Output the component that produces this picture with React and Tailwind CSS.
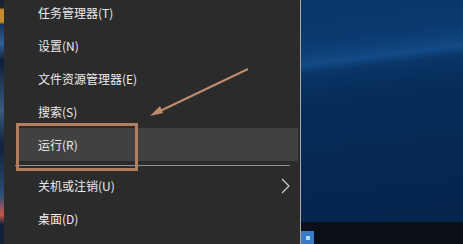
const menuTop = [
  "任务管理器(T)",
  "设置(N)",
  "文件资源管理器(E)",
  "搜索(S)",
];

function MenuRow({ label, active, arrow }) {
  return (
    <div
      className={`flex h-[33px] items-center pr-[10px] ${
        active ? "ml-[12px] mr-[2px] bg-[#414141] pl-[22px]" : "pl-[34px]"
      }`}
    >
      <span className="flex-1 text-[12px] leading-none text-[#ececec]">{label}</span>
      {arrow && (
        <svg width="9" height="16" viewBox="0 0 9 16">
          <path d="M1 1 L8 8 L1 15" fill="none" stroke="#cfcfcf" strokeWidth="1.2" />
        </svg>
      )}
    </div>
  );
}

export default function App() {
  return (
    <div
      className="relative flex h-[244px] w-[463px] overflow-hidden bg-[#2b2b2b]"
      style={{ fontFamily: '"Microsoft YaHei", "Noto Sans CJK SC", sans-serif' }}
    >
      {/* sliver of whatever is behind the menu */}
      <div className="w-[4px] shrink-0 bg-[linear-gradient(180deg,#1a2030_0%,#1a2030_3%,#c98a2e_4%,#c98a2e_9%,#16345c_10%,#2f5f96_18%,#0e1e36_25%,#3a5a80_45%,#10213a_60%,#2c4d78_80%,#c9584a_88%,#10213a_92%)]" />

      {/* context menu */}
      <div className="flex w-[296px] shrink-0 flex-col bg-[#2b2b2b]">
        <div className="-mt-[4px] flex flex-col">
          {menuTop.map((item) => (
            <MenuRow key={item} label={item} />
          ))}
          <MenuRow label="运行(R)" active />
          <div className="flex h-[8px] items-center pl-[11px] pr-[10px]">
            <div className="h-px flex-1 bg-[#8f8f8f]" />
          </div>
          <MenuRow label="关机或注销(U)" arrow />
          <MenuRow label="桌面(D)" />
        </div>
      </div>

      {/* menu border */}
      <div className="w-[1px] shrink-0 bg-[#a9a9a9]" />

      {/* desktop */}
      <div className="flex flex-1 flex-col">
        <div className="flex-1 bg-[linear-gradient(173deg,#0a3668_0%,#0b3a70_18%,#0d4179_23%,#124b88_27%,#0a3566_31%,#062c5a_42%,#05244c_100%)]" />
        <div className="flex h-[22px] items-end bg-[#0b0f18]">
          <div className="flex h-[13px] w-[13px] items-center justify-center bg-[#3b79c9]">
            <div className="h-[4px] w-[4px] bg-[#a8e0ff]" />
          </div>
        </div>
      </div>

      {/* annotation: box */}
      <div className="absolute left-[16px] top-[123px] h-[48px] w-[122px] border-[3px] border-[#b07f62]" />

      {/* annotation: arrow */}
      <svg className="absolute left-0 top-0" width="463" height="244" viewBox="0 0 463 244">
        <line x1="248" y1="69" x2="158" y2="112" stroke="#c08c6c" strokeWidth="2" />
        <polygon points="150,116 160,106 163,113" fill="#c08c6c" />
      </svg>
    </div>
  );
}
